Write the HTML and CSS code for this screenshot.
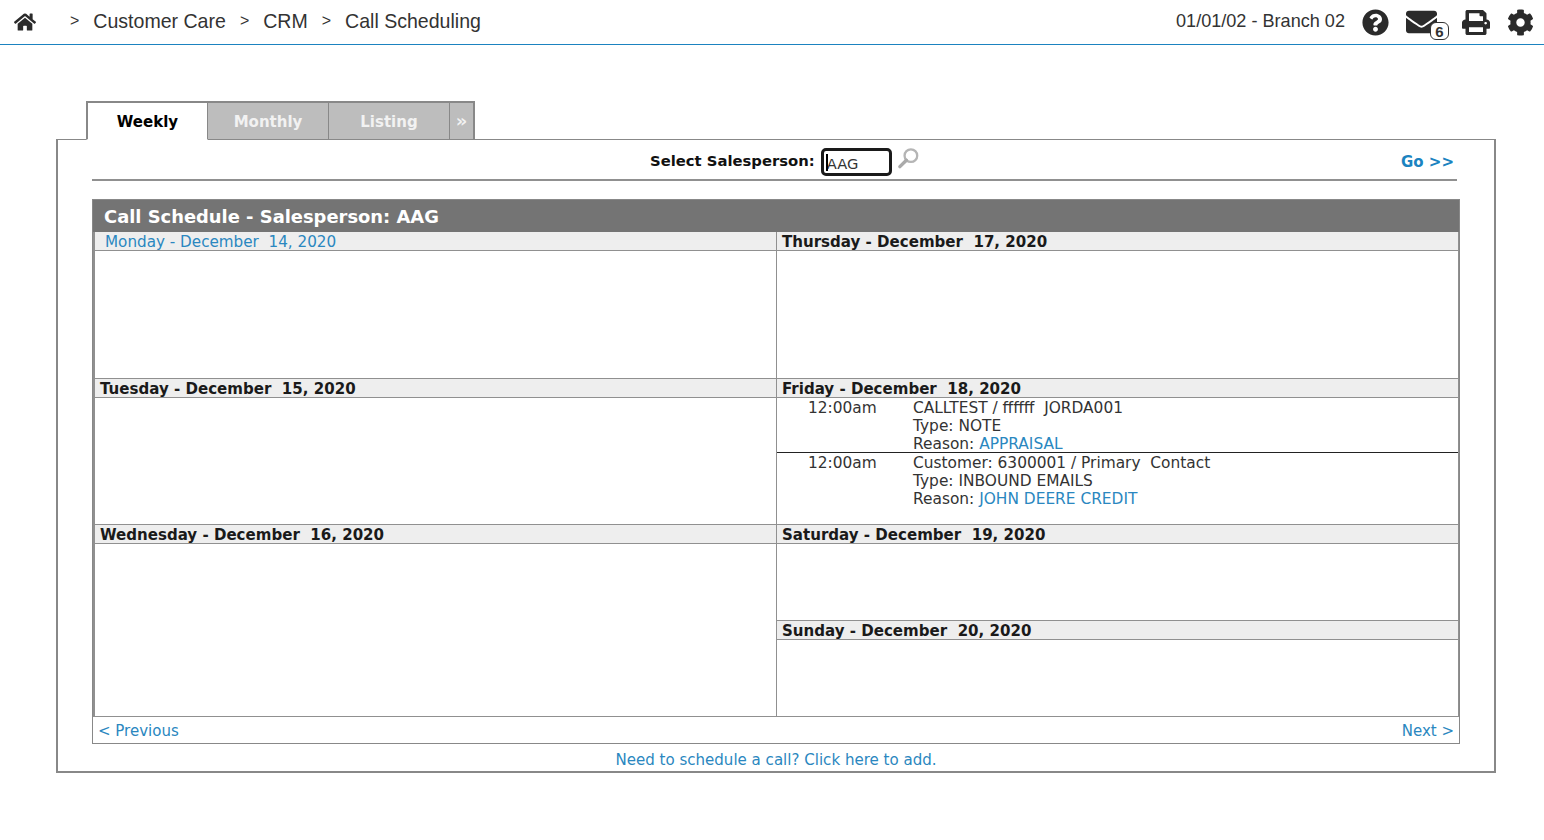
FILE: index.html
```html
<!DOCTYPE html>
<html lang="en">
<head>
<meta charset="utf-8">
<title>Call Scheduling</title>
<link rel="stylesheet" href="styles.css">
</head>
<body>
<header class="topbar">
  <nav class="crumbs">
    <svg class="icon home" viewBox="0 0 576 512"><path d="M280.37 148.26L96 300.11V464a16 16 0 0 0 16 16l112.06-.29a16 16 0 0 0 15.92-16V368a16 16 0 0 1 16-16h64a16 16 0 0 1 16 16v95.64a16 16 0 0 0 16 16.05L464 480a16 16 0 0 0 16-16V300L295.67 148.26a12.19 12.19 0 0 0-15.3 0zM571.6 251.47L488 182.56V44.05a12 12 0 0 0-12-12h-56a12 12 0 0 0-12 12v72.61L318.47 43a48 48 0 0 0-61 0L4.34 251.47a12 12 0 0 0-1.6 16.9l25.5 31A12 12 0 0 0 45.15 301l235.22-193.74a12.19 12.19 0 0 1 15.3 0L530.9 301a12 12 0 0 0 16.9-1.6l25.5-31a12 12 0 0 0-1.7-16.93z"/></svg>
    <span class="sep first">&gt;</span><span class="crumb">Customer Care</span>
    <span class="sep">&gt;</span><span class="crumb">CRM</span>
    <span class="sep">&gt;</span><span class="crumb">Call Scheduling</span>
  </nav>
  <div class="tools">
    <span class="branch">01/01/02 - Branch 02</span>
    <svg class="icon help" viewBox="0 0 512 512"><path d="M504 256c0 136.997-111.043 248-248 248S8 392.997 8 256C8 119.083 119.043 8 256 8s248 111.083 248 248zM262.655 90c-54.497 0-89.255 22.957-116.549 63.758-3.536 5.286-2.353 12.415 2.715 16.258l34.699 26.31c5.205 3.947 12.621 3.008 16.665-2.122 17.864-22.658 30.113-35.797 57.303-35.797 20.429 0 45.698 13.148 45.698 32.958 0 14.976-12.363 22.667-32.534 33.976C247.128 238.528 216 254.941 216 296v4c0 6.627 5.373 12 12 12h56c6.627 0 12-5.373 12-12v-1.333c0-28.462 83.186-29.647 83.186-106.667 0-58.002-60.165-102-116.531-102zM256 338c-25.365 0-46 20.635-46 46 0 25.364 20.635 46 46 46s46-20.636 46-46c0-25.365-20.635-46-46-46z"/></svg>
    <span class="mail">
      <svg class="icon envelope" viewBox="0 0 512 512" preserveAspectRatio="none"><path d="M502.3 190.8c3.9-3.1 9.7-.2 9.7 4.7V400c0 26.5-21.5 48-48 48H48c-26.5 0-48-21.5-48-48V195.6c0-5 5.7-7.8 9.7-4.7 22.4 17.4 52.1 39.5 154.1 113.6 21.1 15.4 56.7 47.8 92.2 47.6 35.7.3 72-32.8 92.3-47.6 102-74.1 131.6-96.3 154-113.7zM256 320c23.2.4 56.6-29.2 73.4-41.4 132.7-96.3 142.8-104.7 173.4-128.7 5.8-4.5 9.2-11.5 9.2-18.9v-19c0-26.5-21.5-48-48-48H48C21.5 64 0 85.5 0 112v19c0 7.4 3.4 14.3 9.2 18.9 30.6 23.9 40.7 32.4 173.4 128.7 16.8 12.2 50.2 41.8 73.4 41.4z"/></svg>
      <span class="badge">6</span>
    </span>
    <svg class="icon print" viewBox="0 0 512 512" preserveAspectRatio="none"><path d="M448 192V77.25c0-8.49-3.37-16.62-9.37-22.63L393.37 9.37c-6-6-14.14-9.37-22.63-9.37H96C78.33 0 64 14.33 64 32v160c-35.35 0-64 28.65-64 64v112c0 8.84 7.16 16 16 16h48v96c0 17.67 14.33 32 32 32h320c17.67 0 32-14.33 32-32v-96h48c8.84 0 16-7.16 16-16V256c0-35.35-28.65-64-64-64zm-64 256H128v-96h256v96zm0-224H128V64h192v48c0 8.84 7.16 16 16 16h48v96zm48 72c-13.25 0-24-10.75-24-24 0-13.26 10.75-24 24-24s24 10.74 24 24c0 13.25-10.75 24-24 24z"/></svg>
    <svg class="icon cog" viewBox="0 0 512 512"><path d="M487.4 315.7l-42.6-24.6c4.3-23.2 4.3-47 0-70.2l42.6-24.6c4.9-2.8 7.1-8.6 5.5-14-11.1-35.6-30-67.8-54.7-94.6-3.8-4.1-10-5.1-14.8-2.3L380.8 110c-17.9-15.4-38.5-27.3-60.8-35.1V25.8c0-5.6-3.9-10.5-9.4-11.7-36.7-8.2-74.3-7.8-109.2 0-5.5 1.2-9.4 6.1-9.4 11.7V75c-22.2 7.9-42.8 19.8-60.8 35.1L88.7 85.5c-4.9-2.8-11-1.9-14.8 2.3-24.7 26.7-43.6 58.9-54.7 94.6-1.7 5.4.6 11.2 5.5 14L67.3 221c-4.3 23.2-4.3 47 0 70.2l-42.6 24.6c-4.9 2.8-7.1 8.6-5.5 14 11.1 35.6 30 67.8 54.7 94.6 3.8 4.1 10 5.1 14.8 2.3l42.6-24.6c17.9 15.4 38.5 27.3 60.8 35.1v49.2c0 5.6 3.9 10.5 9.4 11.7 36.7 8.2 74.3 7.8 109.2 0 5.5-1.2 9.4-6.1 9.4-11.7v-49.2c22.2-7.9 42.8-19.8 60.8-35.1l42.6 24.6c4.9 2.8 11 1.9 14.8-2.3 24.7-26.7 43.6-58.9 54.7-94.6 1.5-5.5-.7-11.3-5.6-14.1zM256 336c-44.1 0-80-35.9-80-80s35.9-80 80-80 80 35.9 80 80-35.9 80-80 80z"/></svg>
  </div>
</header>

<main class="content">
  <div class="tabs">
    <a class="tab active">Weekly</a>
    <a class="tab">Monthly</a>
    <a class="tab">Listing</a>
    <a class="tab more">»</a>
  </div>
  <section class="panel">
    <div class="filter">
      <div class="filter-center">
        <label class="filter-label">Select Salesperson:</label>
        <span class="picker"><span class="caret"></span>AAG</span>
        <svg class="search" viewBox="0 0 24 24"><circle cx="14.5" cy="9" r="6.6"/><path class="handle" d="M9.8 13.8L3 20.5"/></svg>
      </div>
      <a class="go">Go &gt;&gt;</a>
    </div>

    <div class="schedule">
      <h1 class="schedule-title">Call Schedule - Salesperson: AAG</h1>
      <div class="days">
        <div class="day mon">
          <h2 class="day-head today">Monday - December&nbsp; 14, 2020</h2>
        </div>
        <div class="day thu">
          <h2 class="day-head">Thursday - December&nbsp; 17, 2020</h2>
        </div>
        <div class="day tue">
          <h2 class="day-head">Tuesday - December&nbsp; 15, 2020</h2>
        </div>
        <div class="day fri">
          <h2 class="day-head">Friday - December&nbsp; 18, 2020</h2>
          <div class="call">
            <span class="time">12:00am</span>
            <div class="details">
              <div>CALLTEST / ffffff&nbsp; JORDA001</div>
              <div>Type: NOTE</div>
              <div>Reason: <a class="link">APPRAISAL</a></div>
            </div>
          </div>
          <div class="call">
            <span class="time">12:00am</span>
            <div class="details">
              <div>Customer: 6300001 / Primary&nbsp; Contact</div>
              <div>Type: INBOUND EMAILS</div>
              <div>Reason: <a class="link">JOHN DEERE CREDIT</a></div>
            </div>
          </div>
        </div>
        <div class="day wed">
          <h2 class="day-head">Wednesday - December&nbsp; 16, 2020</h2>
        </div>
        <div class="day weekend">
          <div class="sat">
            <h2 class="day-head">Saturday - December&nbsp; 19, 2020</h2>
          </div>
          <div class="sun">
            <h2 class="day-head">Sunday - December&nbsp; 20, 2020</h2>
          </div>
        </div>
      </div>
      <div class="pager">
        <a class="link">&lt; Previous</a>
        <a class="link">Next &gt;</a>
      </div>
    </div>
    <a class="link add">Need to schedule a call? Click here to add.</a>
  </section>
</main>
</body>
</html>
```
FILE: styles.css
```css
* { box-sizing: border-box; }
html, body { margin: 0; padding: 0; background: #fff; }
body {
  width: 1544px;
  height: 840px;
  overflow: hidden;
  font-family: "DejaVu Sans", Verdana, sans-serif;
  font-size: 15.4px;
  color: #333;
}
a { cursor: pointer; }

.topbar {
  height: 45px;
  border-bottom: 1px solid #1b83c0;
  display: flex;
  justify-content: space-between;
  align-items: center;
  font-family: "Liberation Sans", Arial, sans-serif;
  color: #333;
}
.crumbs { display: flex; align-items: center; font-size: 19.56px; padding: 0 0 2px 14px; }
.icon { fill: #2b2b2b; display: block; }
.home { width: 22px; height: 20px; margin-top: 2px; }
.sep { font-size: 16px; margin: 0 14px; }
.sep.first { margin-left: 34px; margin-right: 14px; }
.tools { display: flex; align-items: center; padding-right: 10px; }
.branch { font-size: 18.1px; margin: 0 17px 2px 0; }
.help { width: 27px; height: 27px; margin-right: 17px; }
.mail { position: relative; display: block; width: 43px; height: 27px; margin-right: 13px; }
.envelope { width: 31px; height: 30px; margin-top: -2px; }
.badge {
  position: absolute;
  right: 0;
  bottom: -4px;
  width: 19px;
  height: 18px;
  background: #fff;
  border: 1px solid #333;
  border-radius: 6px;
  font-size: 15px;
  font-weight: bold;
  line-height: 17px;
  text-align: center;
}
.print { width: 28px; height: 25px; margin-right: 17px; }
.cog { width: 27px; height: 27px; }

.content { padding: 56px 48px 0 56px; }
.tabs { display: flex; margin-left: 30px; height: 39px; position: relative; z-index: 1; margin-bottom: -1px; }
.tab {
  width: 121px;
  height: 39px;
  background: #bdbdbd;
  border: 2px solid #888;
  border-left-width: 0;
  border-bottom: 1px solid #888;
  color: #f2f2f2;
  font-weight: bold;
  font-size: 15px;
  line-height: 39px;
  text-align: center;
}
.tab + .tab { border-right-width: 1px; }
.tab.active {
  width: 122px;
  background: #fff;
  color: #000;
  border-left-width: 2px;
  border-bottom: 1px solid #fff;
  border-right-width: 1px;
}
.tab.more { width: 25px; border-right-width: 2px; font-size: 18px; line-height: 36px; }

.panel {
  width: 1440px;
  height: 634px;
  border: 2px solid #888;
  border-top-width: 1px;
  padding: 0 34px;
  display: flex;
  flex-direction: column;
}
.filter {
  width: 1365px;
  height: 41px;
  border-bottom: 2px solid #909090;
  position: relative;
  display: flex;
  justify-content: flex-end;
  align-items: center;
  font-size: 14.67px;
}
.filter-center {
  position: absolute;
  left: 558px;
  top: 6px;
  display: flex;
  align-items: center;
  gap: 6px;
}
.filter-label { font-weight: bold; font-size: 14.8px; color: #111; margin-bottom: 1px; }
.picker {
  position: relative;
  display: block;
  width: 71px;
  height: 28px;
  border: 3px solid #1a1a1a;
  border-radius: 5px;
  font-size: 14.67px;
  line-height: 25px;
  padding-left: 3px;
  margin-top: 2px;
}
.caret { position: absolute; left: 2px; top: 3px; width: 2px; height: 17px; background: #000; }
.search { width: 23px; height: 23px; margin: 0 0 6px -1px; fill: none; stroke: #b5b5b5; stroke-width: 2.4; }
.search .handle { stroke-width: 3.6; stroke-linecap: round; stroke: #aaa; }
.go { color: #1b83c0; font-weight: bold; font-size: 15px; margin: 5px 3px 0 0; }

.schedule {
  width: 1368px;
  height: 545px;
  margin-top: 18px;
  border: 1px solid #888;
  flex: none;
}
.schedule-title {
  margin: 0;
  height: 32px;
  background: #747474;
  color: #fff;
  font-size: 17.9px;
  font-weight: bold;
  line-height: 33px;
  padding-left: 11px;
}
.days {
  display: grid;
  grid-template-columns: 682px 682px;
  grid-template-rows: 147px 146px 192px;
  border-left: 2px solid #909090;
  height: 485px;
  width: 1366px;
}
.day {
  border-bottom: 1px solid #909090;
  border-right: 1px solid #909090;
  min-width: 0;
}
.day-head {
  margin: 0;
  height: 19px;
  background: #eee;
  border-bottom: 1px solid #909090;
  font-size: 15.05px;
  line-height: 18px;
  padding: 1px 0 0 5px;
  font-weight: bold;
  color: #1a1a1a;
  white-space: nowrap;
}
.day-head.today { color: #2a87c0; font-weight: normal; font-size: 15.2px; padding-left: 10px; }
.sat { height: 96px; border-bottom: 1px solid #909090; }
.call {
  display: flex;
  height: 55px;
  border-bottom: 1px solid #222;
  line-height: 18px;
  padding-top: 1px;
}
.call:last-child { border-bottom: 0; }
.time { width: 136px; padding-left: 31px; flex: none; }
.link { color: #2a87c0; }
.pager {
  display: flex;
  justify-content: space-between;
  align-items: center;
  height: 26px;
  padding: 2px 5px 0;
  font-size: 15px;
}
.add { display: block; text-align: center; margin-top: 7px; line-height: 18px; font-size: 15.05px; }
```
